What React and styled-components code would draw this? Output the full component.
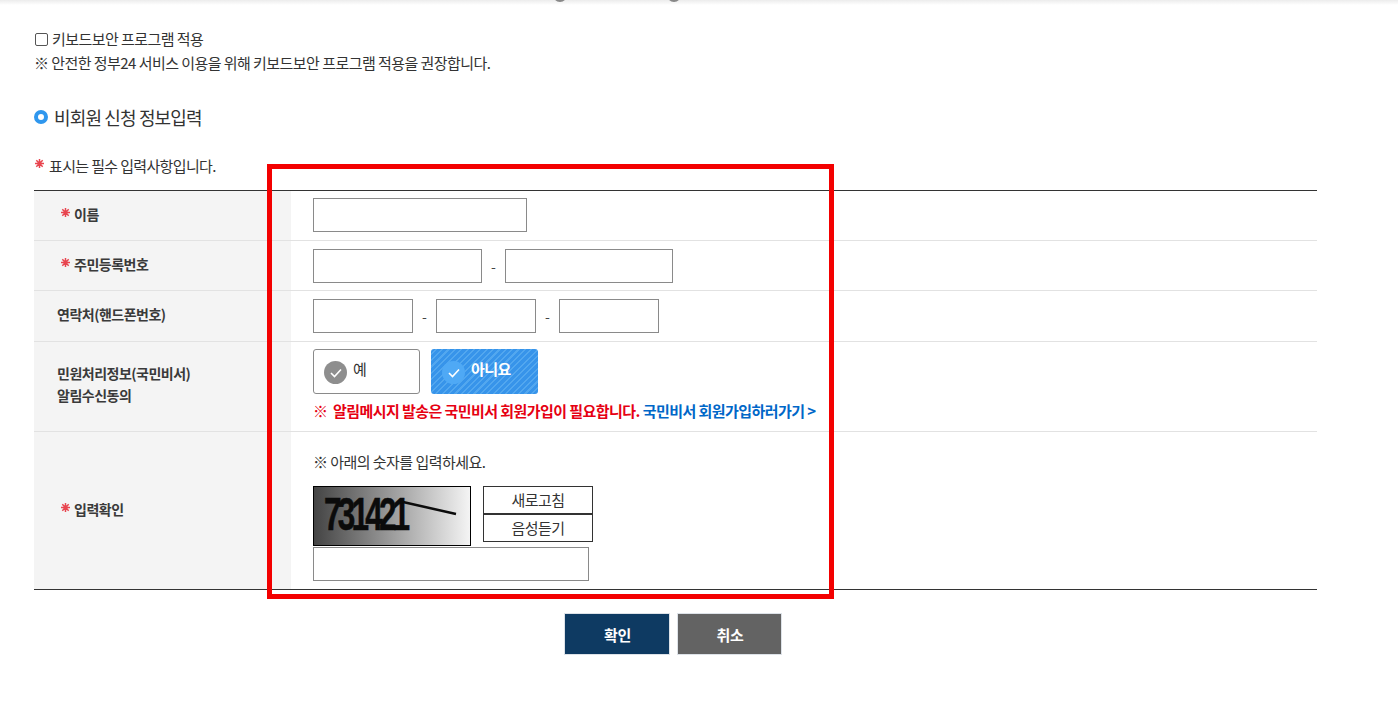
import React from "react";
import styled, { createGlobalStyle } from "styled-components";

const Global = createGlobalStyle`
  html, body { margin: 0; padding: 0; background: #fff; }
  body { font-family: "Noto Sans CJK KR", "Noto Sans", sans-serif; color: #333; overflow: hidden; }
  * { box-sizing: border-box; }
`;

const Page = styled.div`
  position: relative;
  width: 1398px;
  height: 710px;
  padding: 28px 81px 0 34px;
  overflow: hidden;
`;
const TopShade = styled.div`
  position: absolute;
  left: 0; right: 0; top: 0;
  height: 5px;
  background: linear-gradient(#ececec, #fff);
`;
const TopArc = styled.span`
  position: absolute;
  top: -12px;
  left: ${p => p.$x}px;
  width: 14px;
  height: 14px;
  border: 2px solid #888;
  border-radius: 50%;
`;
const CheckRow = styled.label`
  display: flex;
  align-items: center;
  height: 20px;
  font-size: 15px;
  letter-spacing: -0.55px;
  color: #333;
`;
const Box = styled.span`
  width: 13px;
  height: 13px;
  margin: 2px 4px 0 1px;
  border: 1px solid #555;
  border-radius: 2px;
  background: #fff;
`;
const Notice = styled.p`
  margin: 5px 0 0;
  height: 20px;
  line-height: 20px;
  font-size: 15px;
  letter-spacing: -0.55px;
  color: #333;
`;
const Heading = styled.h3`
  display: flex;
  align-items: center;
  margin: 32px 0 0;
  height: 24px;
  font-size: 18px;
  font-weight: 400;
  letter-spacing: -0.85px;
  color: #333;
`;
const Ring = styled.span`
  width: 14px;
  height: 14px;
  margin-right: 6px;
  border: 4px solid #2f97ee;
  border-radius: 50%;
`;
const Required = styled.p`
  display: flex;
  align-items: center;
  margin: 26px 0 0;
  height: 20px;
  font-size: 15px;
  letter-spacing: -0.65px;
  color: #333;
`;
const StarIcon = styled.svg`
  flex: none;
  margin: ${p => p.$up ? "0 5px 4px 1px" : "0 4px 3px 0"};
`;
const Table = styled.div`
  margin-top: 15px;
  border-top: 1px solid #333;
  border-bottom: 1px solid #333;
`;
const Row = styled.div`
  display: grid;
  grid-template-columns: 257px 1fr;
  height: ${p => p.$h}px;
  border-bottom: ${p => (p.$last ? "none" : "1px solid #e2e2e2")};
`;
const Label = styled.div`
  display: flex;
  align-items: center;
  padding: 0 0 ${p => (p.$req ? 3 : 5)}px ${p => (p.$req ? 27 : 23)}px;
  background: #f4f4f4;
  font-size: 14px;
  font-weight: 700;
  letter-spacing: -0.5px;
  line-height: 22px;
  color: #3a3a3a;
`;
const Cell = styled.div`
  padding: ${p => p.$pad || 7}px 0 0 22px;
`;
const Inline = styled.div`
  display: flex;
  align-items: center;
`;
const Field = styled.div`
  width: ${p => p.$w}px;
  height: 34px;
  margin-top: ${p => p.$top || 0}px;
  border: 1px solid #8a8a8a;
  background: #fff;
`;
const Dash = styled.span`
  width: ${p => p.$w}px;
  text-align: center;
  font-size: 14px;
  color: #444;
`;
const Choices = styled.div`
  display: flex;
  gap: 11px;
`;
const Choice = styled.div`
  display: flex;
  align-items: center;
  gap: 6px;
  width: 107px;
  height: 45px;
  padding: 0 0 6px ${p => (p.$on ? 11 : 10)}px;
  border-radius: 3px;
  font-size: 15px;
  letter-spacing: -0.6px;
  ${p => p.$on ? `
    border: none;
    color: #fff;
    font-weight: 700;
    background: repeating-linear-gradient(135deg, #3794ea 0 3px, #52a7ef 3px 4.5px);
  ` : `
    border: 1px solid #8a8a8a;
    color: #333;
    background: #fff;
  `}
`;
const Tick = styled.span`
  display: flex;
  align-items: center;
  justify-content: center;
  width: 23px;
  height: 23px;
  margin-top: 8px;
  border-radius: 50%;
  background: ${p => (p.$on ? "#4fa9f5" : "#8e8e8e")};
`;
const Alert = styled.p`
  margin: 6px 0 0;
  height: 22px;
  line-height: 22px;
  font-size: 15px;
  font-weight: 700;
  letter-spacing: -0.57px;
  color: #e60012;
`;
const AlertLink = styled.a`
  color: #0067c8;
  letter-spacing: -0.55px;
`;
const Hint = styled.p`
  margin: 0;
  height: 20px;
  line-height: 20px;
  font-size: 15px;
  letter-spacing: -0.55px;
  color: #333;
`;
const CaptchaRow = styled.div`
  display: flex;
  gap: 12px;
  margin-top: 14px;
`;
const Captcha = styled.div`
  position: relative;
  width: 158px;
  height: 60px;
  border: 1px solid #000;
  overflow: hidden;
  background: linear-gradient(90deg, #444, #f4f4f4);
`;
const Digits = styled.span`
  position: absolute;
  left: 10px;
  top: -3px;
  font-family: "Liberation Sans", sans-serif;
  font-size: 38px;
  font-weight: 700;
  line-height: 50px;
  letter-spacing: -4.6px;
  color: #0b0b0b;
  -webkit-text-stroke: 0.5px #0b0b0b;
  transform: scale(0.83, 1.2);
  transform-origin: top left;
`;
const Strike = styled.svg`
  position: absolute;
  left: 0;
  top: 0;
`;
const SideButtons = styled.div`
  display: flex;
  flex-direction: column;
`;
const SideButton = styled.button`
  width: 110px;
  height: 28px;
  padding: 0 0 2px;
  border: 1px solid #333;
  background: #fff;
  font-family: inherit;
  font-size: 15px;
  letter-spacing: -0.6px;
  color: #333;
`;
const Actions = styled.div`
  display: flex;
  justify-content: center;
  gap: 7px;
  margin-top: 23px;
  padding-right: 6px;
`;
const Action = styled.button`
  width: ${p => (p.$primary ? 106 : 105)}px;
  height: 42px;
  padding: 0 0 0 2px;
  border: 1px solid #dde2e8;
  background: ${p => (p.$primary ? "#0e3a62" : "#636363")};
  color: #fff;
  font-family: inherit;
  font-size: 15px;
  font-weight: 700;
  letter-spacing: -0.3px;
`;
const Highlight = styled.div`
  position: absolute;
  left: 267px;
  top: 164px;
  width: 567px;
  height: 435px;
  border: 5px solid #f30000;
  pointer-events: none;
`;

const Star = ({ up }) => (
  <StarIcon $up={up} width="9" height="9" viewBox="0 0 9 9" stroke="#e8454f" strokeWidth="1.5">
    <path d="M4.5 0v9M0 4.5h9M1.3 1.3l6.4 6.4M7.7 1.3L1.3 7.7" />
  </StarIcon>
);

const Check = () => (
  <svg width="12" height="10" viewBox="0 0 12 10" fill="none" stroke="#fff" strokeWidth="1.6">
    <path d="M1 5l3.5 3.5L11 1.5" />
  </svg>
);

export default function App() {
  return (
    <Page>
      <Global />
      <TopShade />
      <TopArc $x={553} />
      <TopArc $x={667} />
      <CheckRow><Box />키보드보안 프로그램 적용</CheckRow>
      <Notice>※ 안전한 정부24 서비스 이용을 위해 키보드보안 프로그램 적용을 권장합니다.</Notice>
      <Heading><Ring />비회원 신청 정보입력</Heading>
      <Required><Star up />표시는 필수 입력사항입니다.</Required>
      <Table>
        <Row $h={50}>
          <Label $req><Star />이름</Label>
          <Cell><Field $w={214} /></Cell>
        </Row>
        <Row $h={50}>
          <Label $req><Star />주민등록번호</Label>
          <Cell $pad={8}>
            <Inline><Field $w={169} /><Dash $w={23}>-</Dash><Field $w={168} /></Inline>
          </Cell>
        </Row>
        <Row $h={51}>
          <Label>연락처(핸드폰번호)</Label>
          <Cell $pad={8}>
            <Inline>
              <Field $w={100} /><Dash $w={23}>-</Dash>
              <Field $w={100} /><Dash $w={23}>-</Dash>
              <Field $w={100} />
            </Inline>
          </Cell>
        </Row>
        <Row $h={90}>
          <Label>민원처리정보(국민비서)<br />알림수신동의</Label>
          <Cell>
            <Choices>
              <Choice><Tick><Check /></Tick>예</Choice>
              <Choice $on><Tick $on><Check /></Tick>아니요</Choice>
            </Choices>
            <Alert>※&nbsp; 알림메시지 발송은 국민비서 회원가입이 필요합니다. <AlertLink>국민비서 회원가입하러가기 &gt;</AlertLink></Alert>
          </Cell>
        </Row>
        <Row $h={157} $last>
          <Label $req><Star />입력확인</Label>
          <Cell $pad={20}>
            <Hint>※ 아래의 숫자를 입력하세요.</Hint>
            <CaptchaRow>
              <Captcha>
                <Digits>731421</Digits>
                <Strike width="156" height="58" viewBox="0 0 156 58">
                  <path d="M89 15L142 27" stroke="#0b0b0b" strokeWidth="2.5" />
                </Strike>
              </Captcha>
              <SideButtons>
                <SideButton>새로고침</SideButton>
                <SideButton>음성듣기</SideButton>
              </SideButtons>
            </CaptchaRow>
            <Field $w={276} $top={1} />
          </Cell>
        </Row>
      </Table>
      <Actions>
        <Action $primary>확인</Action>
        <Action>취소</Action>
      </Actions>
      <Highlight />
    </Page>
  );
}
